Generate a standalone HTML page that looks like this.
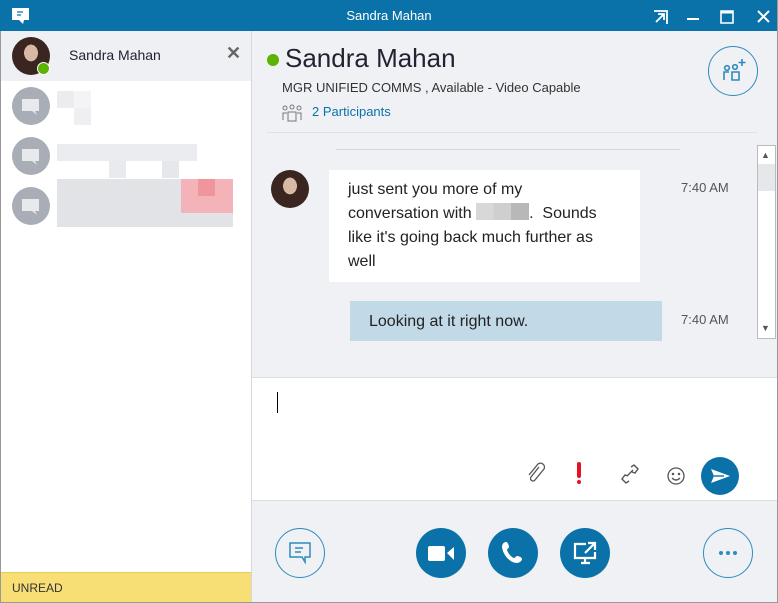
<!DOCTYPE html>
<html><head><meta charset="utf-8"><style>
*{margin:0;padding:0;box-sizing:border-box}
body{width:778px;height:603px;position:relative;overflow:hidden;font-family:"Segoe UI","Liberation Sans",sans-serif;background:#eff1f5;color:#222}
.abs{position:absolute}
.title{left:0;top:0;width:778px;height:31px;background:#0b72a9;color:#fff;font-size:13px;text-align:center;line-height:31px}
.left{left:0;top:31px;width:252px;height:572px;background:#fff;border-left:1px solid #999;border-right:1px solid #d6d8dc}
.px{position:absolute;width:17px;height:17px}
.circ{position:absolute;border-radius:50%}
.btn{position:absolute;width:50px;height:50px;border-radius:50%}
.fill{background:#0b72a9}
.ol{border:1.5px solid #2f8bbd;background:transparent}
.dot{position:absolute;width:4px;height:4px;border-radius:50%;background:#2f8bbd}
</style></head><body>
<div class="abs title">Sandra Mahan</div>
<svg class="abs" style="left:11px;top:7px" width="19" height="18"><path d="M1 1h17v12h-5l-1 4-4-4H1z" fill="#fff"/><path d="M6 5h6M6 8h4" stroke="#0b72a9" stroke-width="1.3"/></svg>
<svg class="abs" style="left:652px;top:9px" width="120" height="16" fill="none" stroke="#fff" stroke-width="2"><path d="M2 2h13v13M4 13l8-8M6 5h6v6" stroke-width="1.8"/><path d="M35 10h12"/><path d="M69 2h12v12H69z" stroke-width="1.6"/><path d="M69 3h12" stroke-width="3"/><path d="M106 2l11 11M117 2l-11 11"/></svg>
<div class="abs left">
 <div class="abs" style="left:0;top:0;width:250px;height:50px;background:#eef0f4"></div>
 <div class="circ" style="left:11px;top:6px;width:38px;height:38px;background:radial-gradient(ellipse 30% 36% at 50% 42%,#d8b9a6 0 60%,#3a2520 62%),#cfcac3;overflow:hidden"></div>
 <div class="circ" style="left:36px;top:31px;width:13px;height:13px;background:#5cb300;border:1.5px solid #fff"></div>
 <div class="abs" style="left:68px;top:16px;font-size:14px;color:#223">Sandra Mahan</div>
 <div class="abs" style="left:225px;top:12px;font-size:18px;font-weight:bold;color:#666">✕</div>
 <div class="circ" style="left:11px;top:56px;width:38px;height:38px;background:#a9adb6"></div>
 <div class="circ" style="left:11px;top:106px;width:38px;height:38px;background:#a9adb6"></div>
 <div class="circ" style="left:11px;top:156px;width:38px;height:38px;background:#a9adb6"></div>
 <svg class="abs" style="left:20px;top:66px" width="20" height="130"><g fill="#e8e9ed"><path d="M1 2h17v12h-4l2 4-5-4H1z"/><path transform="translate(0,50)" d="M1 2h17v12h-4l2 4-5-4H1z"/><path transform="translate(0,100)" d="M1 2h17v12h-4l2 4-5-4H1z"/></g></svg>
 <div class="px" style="left:56px;top:60px;background:#ececef"></div><div class="px" style="left:73px;top:60px;background:#f4f4f6"></div><div class="px" style="left:73px;top:77px;background:#efeff2"></div>
 <div class="abs" style="left:56px;top:113px;width:140px;height:17px;background:#ebecef"></div>
 <div class="px" style="left:108px;top:130px;background:#e9eaed"></div><div class="px" style="left:161px;top:130px;background:#e6e7ea"></div>
 <div class="abs" style="left:56px;top:148px;width:176px;height:48px;background:#e2e3e7"></div>
 <div class="abs" style="left:180px;top:148px;width:52px;height:34px;background:#f3b3b8"></div>
 <div class="px" style="left:197px;top:148px;background:#f0959c"></div>
 <div class="abs" style="left:0;top:541px;width:250px;height:31px;background:#f7df75;border-top:1px solid #e8cc58;font-size:12px;line-height:30px;padding-left:11px;color:#333">UNREAD</div>
</div>
<div class="circ" style="left:267px;top:54px;width:12px;height:12px;background:#5cb300"></div>
<div class="abs" style="left:285px;top:43px;font-size:26px;color:#223">Sandra Mahan</div>
<div class="abs" style="left:282px;top:80px;font-size:13px;color:#333">MGR UNIFIED COMMS , Available - Video Capable</div>
<svg class="abs" style="left:281px;top:104px" width="22" height="18" fill="none" stroke="#777" stroke-width="1"><circle cx="4" cy="4" r="2"/><circle cx="11" cy="3" r="2"/><circle cx="18" cy="4" r="2"/><path d="M2 16V9h4M20 16V9h-4M7 17V8h8v9z"/></svg>
<div class="abs" style="left:312px;top:104px;font-size:13px;color:#0b72a9">2 Participants</div>
<div class="circ" style="left:708px;top:46px;width:50px;height:50px;border:1.5px solid #2f8bbd"></div>
<svg class="abs" style="left:718px;top:56px" width="30" height="30" fill="none" stroke="#2f8bbd" stroke-width="1.6"><circle cx="9" cy="12" r="2.3"/><circle cx="17" cy="11" r="2.3"/><path d="M6 24v-8h5M14 24v-8h7v8z"/><path d="M24 3v7M20.5 6.5h7"/></svg>
<div class="abs" style="left:267px;top:132px;width:490px;height:1px;background:#dfe1e5"></div>
<div class="abs" style="left:336px;top:149px;width:344px;height:1px;background:#d4d6da"></div>
<div class="circ" style="left:271px;top:170px;width:38px;height:38px;background:radial-gradient(ellipse 30% 36% at 50% 42%,#d8b9a6 0 60%,#3a2520 62%),#cfcac3"></div>
<div class="abs" style="left:329px;top:170px;width:311px;height:112px;background:#fff;font-size:16px;line-height:24px;padding:8px 19px;color:#222;white-space:nowrap">just sent you more of my<br>conversation with <span style="display:inline-block;width:53px;height:17px;background:linear-gradient(90deg,#d8d8d8 0 33%,#cfcfcf 33% 66%,#b8b8b8 66%);vertical-align:-2px"></span>.&nbsp; Sounds<br>like it's going back much further as<br>well</div>
<div class="abs" style="left:350px;top:301px;width:312px;height:40px;background:#c2dae7;font-size:16px;line-height:42px;padding-left:19px;color:#222">Looking at it right now.</div>
<div class="abs" style="left:681px;top:180px;font-size:13px;color:#555">7:40 AM</div>
<div class="abs" style="left:681px;top:312px;font-size:13px;color:#555">7:40 AM</div>
<div class="abs" style="left:757px;top:145px;width:19px;height:194px;background:#fff;border:1px solid #bbb"></div>
<div class="abs" style="left:758px;top:164px;width:17px;height:27px;background:#e6e7ea"></div>
<div class="abs" style="left:761px;top:150px;font-size:9px;color:#555">▲</div>
<div class="abs" style="left:761px;top:323px;font-size:9px;color:#555">▼</div>
<div class="abs" style="left:252px;top:377px;width:526px;height:124px;background:#fff;border-top:1px solid #dcdee2;border-bottom:1px solid #dcdee2"></div>
<div class="abs" style="left:277px;top:392px;width:1px;height:21px;background:#000"></div>
<svg class="abs" style="left:525px;top:462px" width="22" height="26" fill="none" stroke="#555" stroke-width="1.3"><path d="M14 5l-8 10a2.5 2.5 0 004 3l9-11a4 4 0 00-6-5L4 13"/></svg>
<div class="abs" style="left:577px;top:462px;width:4px;height:16px;background:#e81123;border-radius:2px"></div>
<div class="abs" style="left:577px;top:480px;width:4px;height:4px;background:#e81123;border-radius:2px"></div>
<svg class="abs" style="left:618px;top:463px" width="24" height="22" fill="none" stroke="#555" stroke-width="1.4"><path d="M13 4l3-2 4 4-3 4-3-1M11 18l-3 2-4-4 3-4 3 1M9 13l6-6"/></svg>
<svg class="abs" style="left:665px;top:465px" width="22" height="22" fill="none" stroke="#555" stroke-width="1.3"><circle cx="11" cy="11" r="8"/><circle cx="8" cy="9" r=".6" fill="#555"/><circle cx="14" cy="9" r=".6" fill="#555"/><path d="M7 13q4 4 8 0"/></svg>
<div class="btn fill" style="left:701px;top:457px;width:38px;height:38px"></div>
<svg class="abs" style="left:710px;top:467px" width="22" height="18"><path d="M1 2l19 7-19 7 3-7z" fill="#fff"/><path d="M4 9h10" stroke="#0b72a9" stroke-width="1.4"/></svg>
<div class="btn ol" style="left:275px;top:528px"></div>
<svg class="abs" style="left:288px;top:541px" width="26" height="26" fill="none" stroke="#2f8bbd" stroke-width="1.5"><path d="M2 2h20v14h-5v5l-3-5H2z"/><path d="M7 7h8M7 11h6"/></svg>
<div class="btn fill" style="left:416px;top:528px"></div>
<svg class="abs" style="left:426px;top:542px" width="30" height="22" fill="#fff"><rect x="2" y="4" width="17" height="15" rx="2"/><path d="M21 11l7-6v13z"/></svg>
<div class="btn fill" style="left:488px;top:528px"></div>
<svg class="abs" style="left:500px;top:540px" width="26" height="26"><path d="M6 2c2 0 3 4 3 5s-2 2-2 3c1 3 4 7 7 8 1 0 2-2 3-2s5 1 5 3-3 4-5 4C10 23 3 15 2 7c0-3 2-5 4-5z" fill="#fff"/></svg>
<div class="btn fill" style="left:560px;top:528px"></div>
<svg class="abs" style="left:572px;top:540px" width="28" height="26" fill="none" stroke="#fff" stroke-width="2.2"><path d="M14 4H3v14h20v-6M9 23h9M13 18v5"/><path d="M13 13l10-10M16 3h7v7"/></svg>
<div class="btn ol" style="left:703px;top:528px"></div>
<div class="dot" style="left:719px;top:551px"></div><div class="dot" style="left:726px;top:551px"></div><div class="dot" style="left:733px;top:551px"></div>
<div class="abs" style="left:777px;top:0;width:1px;height:603px;background:#999"></div>
<div class="abs" style="left:0;top:602px;width:778px;height:1px;background:#999"></div>
</body></html>
